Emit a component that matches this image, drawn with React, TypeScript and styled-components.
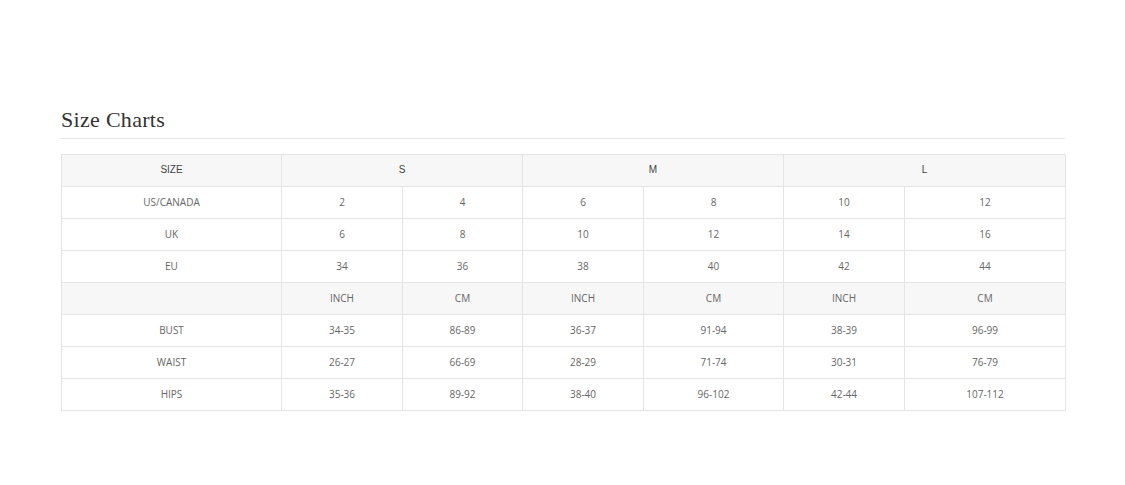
import styled, { createGlobalStyle } from "styled-components";

const GlobalStyle = createGlobalStyle`
	html, body {
		margin: 0;
		padding: 0;
		background: #fff;
	}
`;

const Page = styled.div`
	width: 1125px;
	height: 485px;
	box-sizing: border-box;
	padding: 106px 60px 0 61px;
`;

const Title = styled.h2`
	margin: 0;
	font: 400 22px/28px "Liberation Serif", "DejaVu Serif", serif;
	color: #333;
	letter-spacing: 0.3px;
	padding-bottom: 4px;
	border-bottom: 1px solid #e6e6e6;
`;

const Table = styled.table`
	margin-top: 15px;
	width: 1004px;
	border-collapse: collapse;
	table-layout: fixed;
`;

const Row = styled.tr<{ shaded?: boolean }>`
	height: 32px;
	background: ${({ shaded }) => (shaded ? "#f7f7f7" : "#fff")};
`;

const Cell = styled.td<{ head?: boolean }>`
	border: 1px solid #e4e4e4;
	padding: 0 0 2px;
	text-align: center;
	vertical-align: middle;
	color: ${({ head }) => (head ? "#444" : "#666")};
	font: ${({ head }) =>
		head ? `400 10px "Liberation Sans", Arial, sans-serif` : `400 10px "Open Sans", sans-serif`};
`;

const widths = [220, 121, 120, 121, 140, 121, 161];

const body: [string, string[]][] = [
	["US/CANADA", ["2", "4", "6", "8", "10", "12"]],
	["UK", ["6", "8", "10", "12", "14", "16"]],
	["EU", ["34", "36", "38", "40", "42", "44"]],
];

const measures: [string, string[]][] = [
	["BUST", ["34-35", "86-89", "36-37", "91-94", "38-39", "96-99"]],
	["WAIST", ["26-27", "66-69", "28-29", "71-74", "30-31", "76-79"]],
	["HIPS", ["35-36", "89-92", "38-40", "96-102", "42-44", "107-112"]],
];

const App = () => {
	return (
		<Page>
			<GlobalStyle />
			<Title>Size Charts</Title>
			<Table>
				<colgroup>
					{widths.map((w, i) => (
						<col key={i} style={{ width: w }} />
					))}
				</colgroup>
				<tbody>
					<Row shaded>
						<Cell head>SIZE</Cell>
						<Cell head colSpan={2}>S</Cell>
						<Cell head colSpan={2}>M</Cell>
						<Cell head colSpan={2}>L</Cell>
					</Row>
					{body.map(([label, vals]) => (
						<Row key={label}>
							<Cell>{label}</Cell>
							{vals.map((v, i) => (
								<Cell key={i}>{v}</Cell>
							))}
						</Row>
					))}
					<Row shaded>
						<Cell />
						{["INCH", "CM", "INCH", "CM", "INCH", "CM"].map((u, i) => (
							<Cell key={i}>{u}</Cell>
						))}
					</Row>
					{measures.map(([label, vals]) => (
						<Row key={label}>
							<Cell>{label}</Cell>
							{vals.map((v, i) => (
								<Cell key={i}>{v}</Cell>
							))}
						</Row>
					))}
				</tbody>
			</Table>
		</Page>
	);
};

export default App;
